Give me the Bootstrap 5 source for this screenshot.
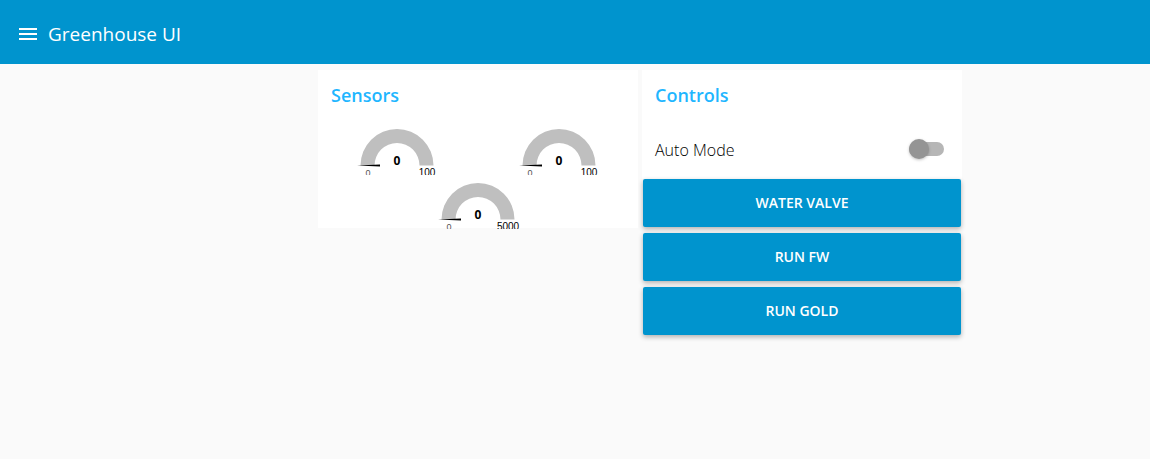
<!DOCTYPE html>
<html lang="en">
<head>
<meta charset="utf-8">
<meta name="viewport" content="width=device-width, initial-scale=1">
<title>Greenhouse UI</title>
<link href="https://cdn.jsdelivr.net/npm/bootstrap@5.3.0/dist/css/bootstrap.min.css" rel="stylesheet">
<style>
  body { background: #fafafa; font-family: "Open Sans", "Noto Sans", sans-serif; color: #000; }
  .topbar { background: #0094ce; height: 64px; padding: 4px 16px 0; }
  .topbar h1 { font-size: 19px; line-height: 28px; color: #fff; }
  .menu-btn { width: 24px; height: 24px; color: #fff; }
  .dashboard { gap: 4px; padding: 6px 0 16px 130px; }
  .panel { width: 320px; }
  .face { background: #fff; }
  .panel h2 { font-size: 18px; line-height: 24px; font-weight: 600; color: #1fb6ff; padding: 13px 13px 20px; }
  .gauges { gap: 6px; margin-bottom: -1px; }
  .gauges svg { width: 156px; height: 48px; overflow: hidden; }
  .gauge-value { font: bold 12px "Open Sans", sans-serif; text-anchor: middle; }
  .gauge-limit { font: 10px "Liberation Sans", sans-serif; text-anchor: middle; }
  .gauge-min { font: 9px "Liberation Sans", sans-serif; text-anchor: middle; fill: #555; }
  .mode-row { height: 52px; padding: 0 18px 12px 13px; }
  .mode-row label { font-size: 16px; line-height: 24px; font-weight: 300; padding-top: 6px; }
  .slide-toggle { appearance: none; position: relative; width: 35px; height: 14px; margin: 4px 0 0; border-radius: 7px; background: #b6b6b6; }
  .slide-toggle::before { content: ""; position: absolute; left: 0; top: -3px; width: 20px; height: 20px; border-radius: 50%; background: #949494; box-shadow: 0 1px 3px rgba(0,0,0,.25); transition: left .1s; }
  .slide-toggle:checked::before { left: 15px; background: #0094ce; }
  .actions { gap: 6px; padding: 0 1px; }
  .action-btn { --bs-btn-color: #fff; --bs-btn-bg: #0094ce; --bs-btn-hover-color: #fff; --bs-btn-hover-bg: #0087bd; --bs-btn-border-width: 0; height: 48px; border-radius: 2px; font-size: 14px; font-weight: 600; line-height: 20px; box-shadow: 0 2px 5px rgba(0,0,0,.3); }
</style>
</head>
<body>
<header class="topbar d-flex align-items-center gap-2">
  <button type="button" class="menu-btn btn p-0 border-0 d-flex" aria-label="Menu">
    <svg width="24" height="24" viewBox="0 0 24 24" fill="currentColor"><path d="M3 6h18v2H3zM3 11h18v2H3zM3 16h18v2H3z"/></svg>
  </button>
  <h1 class="m-0 fw-normal">Greenhouse UI</h1>
</header>

<main class="dashboard d-flex flex-wrap justify-content-center align-items-start">
  <section class="panel face">
    <h2 class="m-0">Sensors</h2>
    <div class="gauges d-flex flex-wrap justify-content-center">
      <svg viewBox="0 0 156 48">
        <path d="M41.500 38.500a36.500 36.500 0 0 1 73 0h-14a22.500 22.500 0 0 0-45 0z" fill="#bfbfbf"/>
        <path d="M38 38.500l23-1v2z"/>
        <text x="78" y="38" class="gauge-value">0</text>
        <text x="49" y="49" class="gauge-min">0</text>
        <text x="108" y="49" class="gauge-limit">100</text>
      </svg>
      <svg viewBox="0 0 156 48">
        <path d="M41.500 38.500a36.500 36.500 0 0 1 73 0h-14a22.500 22.500 0 0 0-45 0z" fill="#bfbfbf"/>
        <path d="M38 38.500l23-1v2z"/>
        <text x="78" y="38" class="gauge-value">0</text>
        <text x="49" y="49" class="gauge-min">0</text>
        <text x="108" y="49" class="gauge-limit">100</text>
      </svg>
      <svg viewBox="0 0 156 48">
        <path d="M41.500 38.500a36.500 36.500 0 0 1 73 0h-14a22.500 22.500 0 0 0-45 0z" fill="#bfbfbf"/>
        <path d="M38 38.500l23-1v2z"/>
        <text x="78" y="38" class="gauge-value">0</text>
        <text x="49" y="49" class="gauge-min">0</text>
        <text x="108" y="49" class="gauge-limit">5000</text>
      </svg>
    </div>
  </section>

  <section class="panel">
    <div class="face">
      <h2 class="m-0">Controls</h2>
      <div class="mode-row d-flex justify-content-between align-items-center">
        <label for="autoMode">Auto Mode</label>
        <input type="checkbox" role="switch" id="autoMode" class="slide-toggle">
      </div>
    </div>
    <div class="actions d-grid">
      <button type="button" class="btn action-btn">WATER VALVE</button>
      <button type="button" class="btn action-btn">RUN FW</button>
      <button type="button" class="btn action-btn">RUN GOLD</button>
    </div>
  </section>
</main>
<script src="https://cdn.jsdelivr.net/npm/bootstrap@5.3.0/dist/js/bootstrap.bundle.min.js"></script>
</body>
</html>
